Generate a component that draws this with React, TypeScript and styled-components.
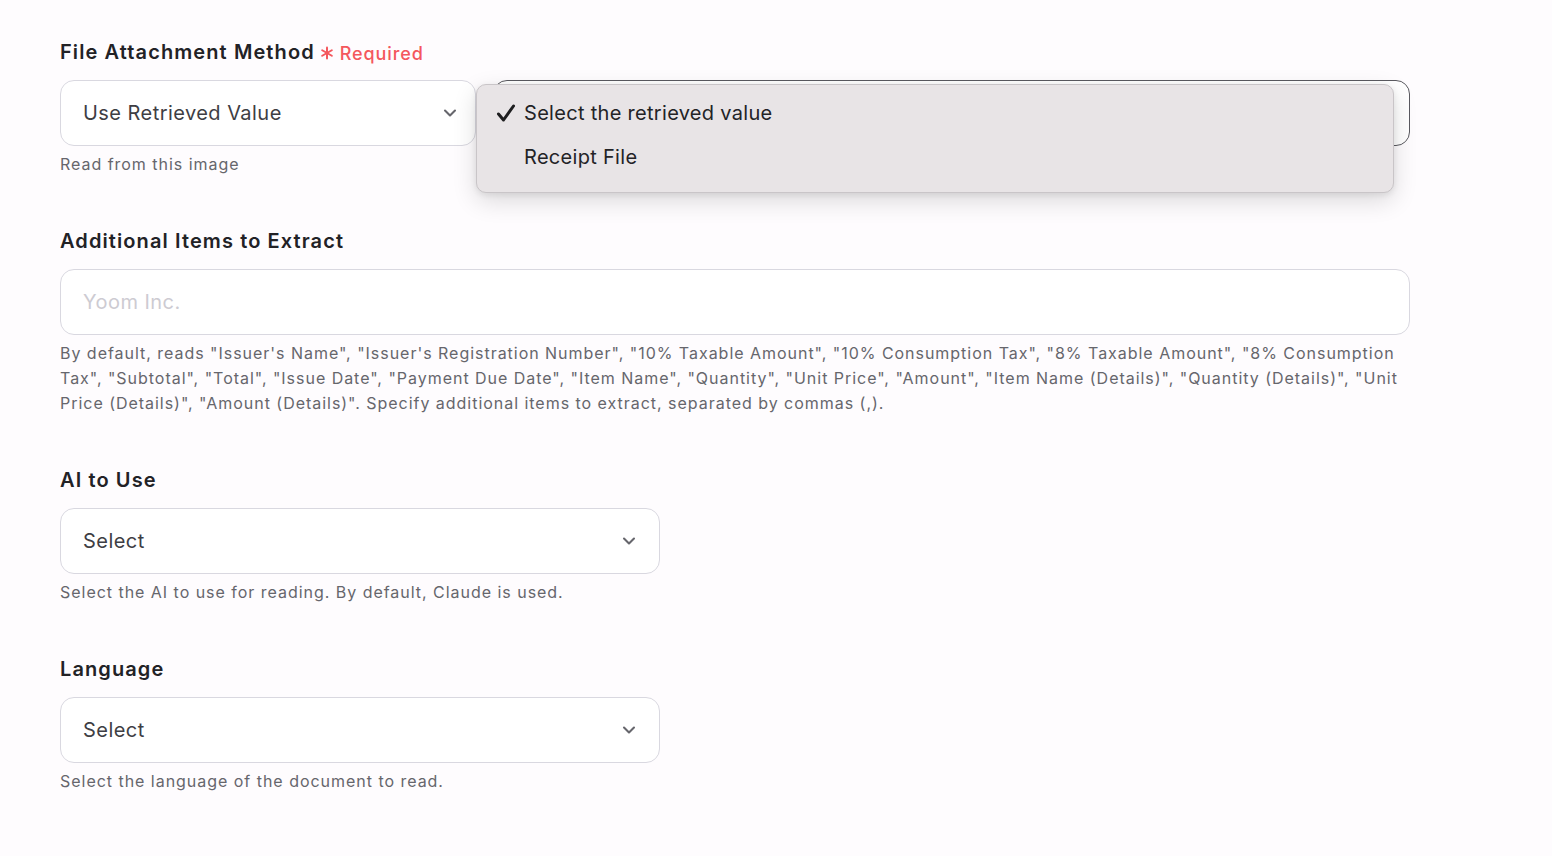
import React from 'react';
import styled, { createGlobalStyle } from 'styled-components';
import { ChevronDown } from 'lucide-react';

const GlobalStyle = createGlobalStyle`
  html, body {
    margin: 0;
    padding: 0;
    background: #fefcfe;
    font-family: Inter, "Noto Sans", sans-serif;
  }
`;

const Page = styled.div`
  padding: 38px 142px 40px 60px;
  display: flex;
  flex-direction: column;
  gap: 50px;
`;

const Field = styled.div`
  display: flex;
  flex-direction: column;
`;

const Label = styled.div`
  display: flex;
  align-items: center;
  gap: 5px;
  height: 28px;
  font-size: 20px;
  font-weight: 600;
  letter-spacing: 1.1px;
  color: #222226;
  margin-bottom: 14px;
`;

const Required = styled.span`
  display: flex;
  align-items: center;
  gap: 6px;
  font-size: 18px;
  font-weight: 500;
  letter-spacing: 0.9px;
  color: #f4575d;
  padding-top: 2px;
`;

const Row = styled.div`
  position: relative;
  display: flex;
  gap: 17px;
`;

const Box = styled.div<{ $width?: number; $focused?: boolean; $padRight?: number }>`
  box-sizing: border-box;
  height: 66px;
  width: ${(p) => (p.$width ? `${p.$width}px` : 'auto')};
  flex: ${(p) => (p.$width ? 'none' : '1 1 auto')};
  border: 1px solid ${(p) => (p.$focused ? '#5a5a60' : '#d9d8e0')};
  border-radius: 14px;
  background: #fff;
  display: flex;
  align-items: center;
  justify-content: space-between;
  padding: 0 ${(p) => p.$padRight ?? 20}px 0 22px;
  font-size: 20px;
  letter-spacing: 0.45px;
  color: #3e3e44;
`;

const Placeholder = styled.span`
  color: #cdcbd2;
`;

const Chevron = styled(ChevronDown)`
  color: #66666c;
`;

const Help = styled.div`
  margin-top: 6px;
  font-size: 16px;
  line-height: 25px;
  letter-spacing: 0.97px;
  color: #66666c;
`;

const Menu = styled.div`
  position: absolute;
  left: 416px;
  top: 4px;
  width: 918px;
  box-sizing: border-box;
  padding: 6px 0 13px;
  background: #e8e4e6;
  border: 1px solid #c9c5c8;
  border-radius: 10px;
  box-shadow: 0 8px 24px rgba(0, 0, 0, 0.14), 0 2px 6px rgba(0, 0, 0, 0.08);
`;

const MenuItem = styled.div`
  display: flex;
  align-items: center;
  height: 44px;
  padding-left: 19px;
  font-size: 20px;
  letter-spacing: 0.3px;
  color: #232326;
`;

const CheckSlot = styled.span`
  width: 28px;
  display: flex;
  align-items: center;
`;

const Check = () => (
  <svg width="20" height="20" viewBox="0 0 20 20">
    <path d="M2.5 11 L7.5 17 L17.5 3" fill="none" stroke="#1e1e20" strokeWidth="3" strokeLinecap="round" strokeLinejoin="round" />
  </svg>
);

const Asterisk = () => (
  <svg width="14" height="14" viewBox="0 0 14 14">
    <g stroke="#f4575d" strokeWidth="2" strokeLinecap="round">
      <path d="M7 1.5 V12.5" />
      <path d="M2.2 4.25 L11.8 9.75" />
      <path d="M2.2 9.75 L11.8 4.25" />
    </g>
  </svg>
);

const App: React.FC = () => {
  return (
    <>
      <GlobalStyle />
      <Page>
        <Field>
          <Label>
            File Attachment Method
            <Required>
              <Asterisk />
              Required
            </Required>
          </Label>
          <Row>
            <Box $width={416} $padRight={15}>
              Use Retrieved Value
              <Chevron size={20} strokeWidth={2.5} />
            </Box>
            <Box $focused />
            <Menu>
              <MenuItem>
                <CheckSlot>
                  <Check />
                </CheckSlot>
                Select the retrieved value
              </MenuItem>
              <MenuItem>
                <CheckSlot />
                Receipt File
              </MenuItem>
            </Menu>
          </Row>
          <Help>Read from this image</Help>
        </Field>

        <Field>
          <Label>Additional Items to Extract</Label>
          <Box>
            <Placeholder>Yoom Inc.</Placeholder>
          </Box>
          <Help>
            By default, reads "Issuer's Name", "Issuer's Registration Number", "10% Taxable Amount", "10% Consumption Tax", "8% Taxable Amount", "8% Consumption Tax", "Subtotal", "Total", "Issue Date", "Payment Due Date", "Item Name", "Quantity", "Unit Price", "Amount", "Item Name (Details)", "Quantity (Details)", "Unit Price (Details)", "Amount (Details)". Specify additional items to extract, separated by commas (,).
          </Help>
        </Field>

        <Field>
          <Label>AI to Use</Label>
          <Box $width={600}>
            Select
            <Chevron size={20} strokeWidth={2.5} />
          </Box>
          <Help>Select the AI to use for reading. By default, Claude is used.</Help>
        </Field>

        <Field>
          <Label>Language</Label>
          <Box $width={600}>
            Select
            <Chevron size={20} strokeWidth={2.5} />
          </Box>
          <Help>Select the language of the document to read.</Help>
        </Field>
      </Page>
    </>
  );
};

export default App;
